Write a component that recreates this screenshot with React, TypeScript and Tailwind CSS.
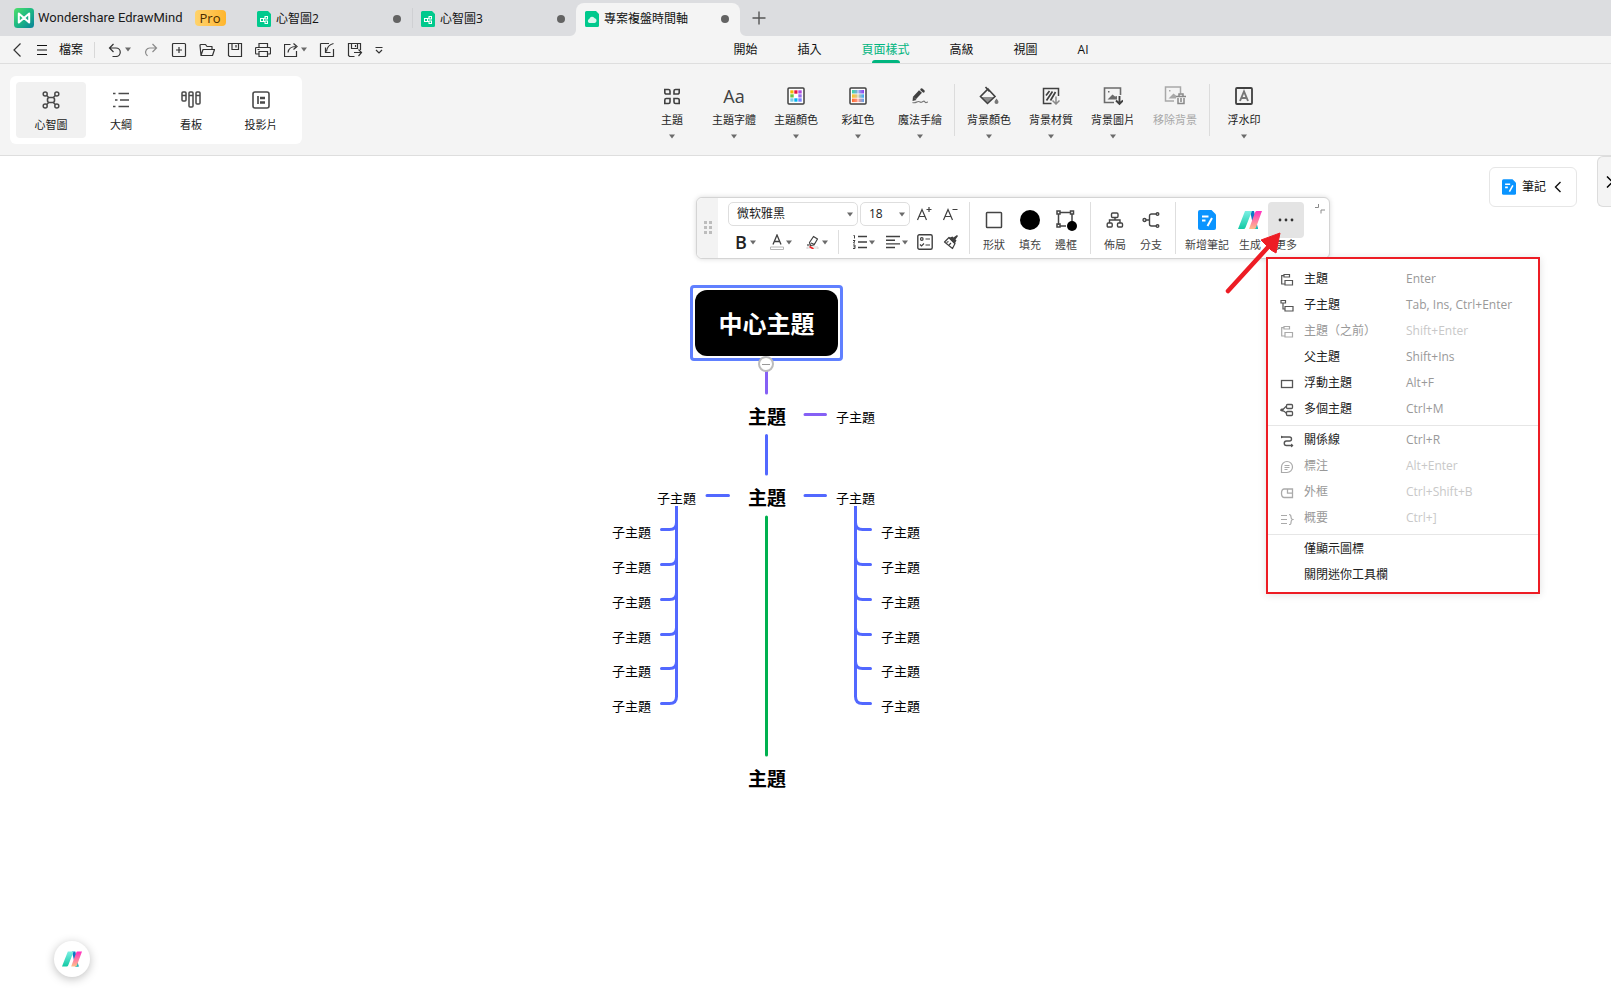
import { ReactNode, useState } from "react";
import clsx from "clsx";

type IconProps = {
    size?: number;
    className?: string;
    children: ReactNode;
};

const Svg = ({ size = 16, className, children }: IconProps) => (
    <svg
        width={size}
        height={size}
        viewBox={`0 0 ${size} ${size}`}
        fill="none"
        stroke="currentColor"
        strokeWidth={1.2}
        aria-hidden="true"
        className={clsx("block shrink-0", className)}
    >
        {children}
    </svg>
);

const Caret = () => (
    <svg width="8" height="5" viewBox="0 0 8 5" className="block shrink-0 fill-[#6b6b6b]" aria-hidden="true">
        <path d="M1 0.5h6L4 4.5z" />
    </svg>
);

/* ---------- logos ---------- */

const AppLogo = () => (
    <svg width="20" height="20" viewBox="0 0 20 20" className="block shrink-0" aria-hidden="true">
        <defs>
            <linearGradient id="appLogo" x1="0" y1="0" x2="1" y2="1">
                <stop offset="0" stopColor="#4fe06a" />
                <stop offset="0.5" stopColor="#1cb884" />
                <stop offset="1" stopColor="#07809a" />
            </linearGradient>
        </defs>
        <rect width="20" height="20" rx="3.5" fill="url(#appLogo)" />
        <path d="M4.800 14.500V5.500L10 10l5.200-4.500v9L10 10z" fill="none" stroke="#fff" strokeWidth="2" strokeLinejoin="round" />
    </svg>
);

const AiLogo = ({ size, id }: { size: number; id: string }) => (
    <svg width={size} height={size} viewBox="0 0 24 24" className="block shrink-0" aria-hidden="true">
        <defs>
            <linearGradient id={`${id}-a`} x1="0" y1="0" x2="0" y2="1">
                <stop offset="0" stopColor="#7cf0e4" />
                <stop offset="1" stopColor="#12c9a4" />
            </linearGradient>
            <linearGradient id={`${id}-b`} x1="0" y1="0" x2="0" y2="1">
                <stop offset="0" stopColor="#ff2fc0" />
                <stop offset="1" stopColor="#ffc08a" />
            </linearGradient>
        </defs>
        <path d="M12 3h4l4 18h-4z" fill="#0c78c4" />
        <path d="M17 14l3 7h-4z" fill="#16c8b0" />
        <path d="M7 3h7L7.500 19.500Q7 21 5.500 21H0z" fill={`url(#${id}-a)`} />
        <path d="M18.500 3H24l-6 16.500Q17.500 21 16 21h-5l6-16.500Q17.500 3 18.500 3z" fill={`url(#${id}-b)`} />
    </svg>
);

const FileBadge = ({ cloud }: { cloud?: boolean }) => (
    <svg width="14" height="16" viewBox="0 0 14 16" className="block shrink-0" aria-hidden="true">
        <path d="M1.500 0H11l3 3v11.500a1.500 1.500 0 0 1-1.500 1.500h-11A1.500 1.500 0 0 1 0 14.500v-13A1.500 1.500 0 0 1 1.500 0z" fill="#00c98d" />
        {cloud ? (
            <path d="M4.600 12a2 2 0 0 1-.3-3.900 2.900 2.900 0 0 1 5.400-.8 2.400 2.400 0 0 1-.1 4.700z" fill="#fff" fillOpacity="0.85" />
        ) : (
            <g fill="none" stroke="#fff">
                <rect x="3.500" y="7.500" width="3" height="3" />
                <rect x="8" y="5.500" width="2.500" height="2.500" />
                <rect x="8" y="10" width="2.500" height="2.500" />
                <path d="M6.500 8.500L8 6.500M6.500 9.500L8 11" />
            </g>
        )}
    </svg>
);

const NoteLogo = ({ large }: { large?: boolean }) => (
    <svg width={large ? 18 : 14} height={large ? 20 : 16} viewBox="0 0 18 20" className="block shrink-0" aria-hidden="true">
        <path d="M2 0h11.500L18 4.500V18a2 2 0 0 1-2 2H2a2 2 0 0 1-2-2V2a2 2 0 0 1 2-2z" fill="#0a94ff" />
        <path d="M4 6.500h6.500M4 10.500h3.500M14 8l-4.500 8" fill="none" stroke="#fff" strokeWidth="2" />
    </svg>
);

/* ---------- quick access icons ---------- */

const UndoIcon = () => (
    <Svg size={14}>
        <path d="M5.500 1L1.500 5l4 4M1.500 5H8a4.200 4.200 0 0 1 0 8.500H4.500" />
    </Svg>
);
const RedoIcon = () => (
    <Svg size={14} className="text-[#8a8a8a]">
        <path d="M8.500 1l4 4-4 4M12.500 5H6a4.200 4.200 0 0 0-4 6l1.500 2" />
    </Svg>
);
const NewIcon = () => (
    <Svg size={16}>
        <rect x="1.500" y="1.500" width="13" height="13" rx="1" />
        <path d="M8 5v6M5 8h6" />
    </Svg>
);
const OpenIcon = () => (
    <Svg size={16}>
        <path d="M2 13.500L1 3.500a1 1 0 0 1 1-1h4.500l1.500 2h5v3M2 13.500L4 7.500h11.500l-2 6z" strokeLinejoin="round" />
    </Svg>
);
const SaveIcon = () => (
    <Svg size={16}>
        <path d="M1.500 1.500h13v13h-12l-1-1zM5 1.500v6h6.500v-6M9 3v2.500" />
    </Svg>
);
const PrintIcon = () => (
    <Svg size={16}>
        <path d="M4 5.500v-4h8.500v4M4 12H1.500a1 1 0 0 1-1-1V6.500a1 1 0 0 1 1-1h13a1 1 0 0 1 1 1V11a1 1 0 0 1-1 1h-2M4 9.500h8.500v5H4zM2.500 7.500h2" />
    </Svg>
);
const ExportIcon = () => (
    <Svg size={14}>
        <path d="M6.500 1.500h-6v12h12V8M4 9.500C4.500 6 7 3.500 12 3.500M9.500 0.500l3.500 3-3.500 3" />
    </Svg>
);
const ImportIcon = () => (
    <Svg size={16}>
        <path d="M10 1.500H1.500M14.500 7v7.500h-13v-13" />
        <path d="M14.500 1.500C10.500 2.500 8 5 7.500 9.500M6.500 5.500v5h5" />
    </Svg>
);
const SaveAsIcon = () => (
    <Svg size={16}>
        <path d="M7.500 14.500h-5l-1-1v-12h12V8M4.500 1.500v5h6v-5M8.500 3v2M7 10.500h7.500M11.500 7.500l3 3-3 3.500" />
    </Svg>
);
const MoreToolsIcon = () => (
    <Svg size={8}>
        <path d="M0.500 1.500h7M1 4l3 3 3-3" />
    </Svg>
);

/* ---------- view mode icons ---------- */

const MindmapIcon = () => (
    <Svg size={18}>
        <rect x="5.500" y="6.500" width="7" height="5" rx="2" strokeWidth={1.600} />
        <g strokeWidth={1.500}>
            <circle cx="3.200" cy="3" r="2" />
            <circle cx="14.800" cy="3" r="2" />
            <circle cx="3.200" cy="15" r="2" />
            <circle cx="14.800" cy="15" r="2" />
            <path d="M4.700 4.500l2 2M13.300 4.500l-2 2M4.700 13.500l2-2M13.300 13.500l-2-2" />
        </g>
    </Svg>
);
const OutlineIcon = () => (
    <Svg size={18}>
        <path d="M1 2.500h2.500M6.500 2.500H17M3 9h2.500M8 9h9M1 15.500h2.500M6.500 15.500H17" strokeWidth={1.700} />
    </Svg>
);
const BoardIcon = () => (
    <Svg size={20}>
        <g strokeWidth={1.500}>
            <rect x="1" y="2" width="4" height="9" rx="1" />
            <rect x="8" y="2" width="4" height="15" rx="1" />
            <rect x="15" y="2" width="4" height="12" rx="1" />
            <path d="M1 5.500h4M8 5.500h4M15 5.500h4" />
        </g>
    </Svg>
);
const SlidesIcon = () => (
    <Svg size={18}>
        <rect x="1" y="1" width="16" height="16" rx="2" strokeWidth={1.600} />
        <path d="M6 5v8" strokeWidth={1.700} />
        <path d="M8 7h5M8 11.500h5" strokeWidth={2.500} />
    </Svg>
);

/* ---------- ribbon icons ---------- */

const ThemeIcon = () => (
    <Svg size={18}>
        <g strokeWidth={1.600}>
            <path d="M1.800 2.500h3.700a1.500 1.500 0 0 1 1.500 1.500v3H3.300a1.500 1.500 0 0 1-1.500-1.500zM16.200 2.500h-3.700A1.500 1.500 0 0 0 11 4v3h3.700a1.500 1.500 0 0 0 1.500-1.500zM1.800 16.500h3.700A1.500 1.500 0 0 0 7 15v-3.500H3.300A1.500 1.500 0 0 0 1.800 13zM16.200 16.500h-3.700A1.500 1.500 0 0 1 11 15v-3.500h3.700a1.500 1.500 0 0 1 1.500 1.500z" />
        </g>
    </Svg>
);

const SWATCHES = [
    { x: 3, y: 3, color: "#f5b800" },
    { x: 7, y: 3, color: "#e5173f" },
    { x: 11, y: 3, color: "#b04be0" },
    { x: 3, y: 7, color: "#6cc644" },
    { x: 11, y: 7, color: "#9a6ff0" },
    { x: 3, y: 11, color: "#7fcde8" },
    { x: 7, y: 11, color: "#00b4f0" },
    { x: 11, y: 11, color: "#7b83ff" },
];

const ThemeColorIcon = () => (
    <Svg size={18}>
        <rect x="1" y="1" width="16" height="16" rx="1" fill="#fff" strokeWidth={1.500} />
        {SWATCHES.map((s) => (
            <rect key={`${s.x}-${s.y}`} x={s.x} y={s.y} width="4" height="4" fill={s.color} stroke="#fff" strokeWidth={0.600} />
        ))}
    </Svg>
);

const RainbowIcon = () => (
    <Svg size={18}>
        <defs>
            <linearGradient id="rb1"><stop offset="0" stopColor="#38d9a0" /><stop offset="0.600" stopColor="#9a9cf0" /><stop offset="1" stopColor="#8a3cf0" /></linearGradient>
            <linearGradient id="rb2"><stop offset="0" stopColor="#ffc21f" /><stop offset="0.500" stopColor="#d5c9a0" /><stop offset="1" stopColor="#36a6ff" /></linearGradient>
            <linearGradient id="rb3"><stop offset="0" stopColor="#ff6a2b" /><stop offset="0.500" stopColor="#ff9b8a" /><stop offset="1" stopColor="#5aa2f5" /></linearGradient>
        </defs>
        <rect x="1" y="1" width="16" height="16" rx="1" fill="#fff" strokeWidth={1.500} />
        <g stroke="none">
            <rect x="3" y="3" width="12" height="3.500" fill="url(#rb1)" />
            <rect x="3" y="7.300" width="12" height="3.500" fill="url(#rb2)" />
            <rect x="3" y="11.600" width="12" height="3.500" fill="url(#rb3)" />
        </g>
        <path d="M9 2v14" stroke="#fff" strokeWidth={0.700} />
    </Svg>
);
const MagicPenIcon = () => (
    <Svg size={18}>
        <path d="M3.500 11L9.500 4.500" strokeWidth={4} />
        <path d="M10.500 2.500L12.500 4.300" strokeWidth={2.500} strokeLinecap="round" />
        <path d="M2 9.500l-.5 4.500 4-1z" fill="currentColor" stroke="none" />
        <path d="M1.500 15.500c3 1 4-1 6-1s1.500 1.500 3.500.5 2-1.500 3 0 2 0 3 0" stroke="#777" />
    </Svg>
);
const BucketIcon = () => (
    <Svg size={20}>
        <path d="M6.500 1l4 4.500" strokeWidth={1.600} />
        <path d="M2 11h13.500L8.500 17z" fill="#8d8d8d" stroke="none" />
        <path d="M9 3l7 7.500-7.500 7-7-7z" strokeWidth={1.600} />
        <path d="M17.500 12.500c1.500 2 2 2.700 2 3.500a2 2 0 0 1-4 0c0-.8.500-1.500 2-3.500z" fill="#777" stroke="none" />
    </Svg>
);
const TextureIcon = () => (
    <Svg size={18}>
        <path d="M9.500 16.500h-8v-15h15V9" strokeWidth={1.500} />
        <path d="M4 8.500L7.500 4M4.500 13.500L10.500 4.500M8.500 13.500l5-8.500" strokeWidth={1.700} />
        <path d="M14 9.500v7.500M10.500 13.500l3.500 3.500 3.500-3.500" stroke="#8a8a8a" strokeWidth={1.500} />
    </Svg>
);
const PictureIcon = () => (
    <Svg size={20}>
        <path d="M11 16.500H1.500V2h16v7" strokeWidth={1.600} stroke="#6b6b6b" />
        <path d="M4.500 13.500l5-5 2.500 2 2-.5v3.500z" fill="#6b6b6b" stroke="none" />
        <path d="M5 5h1.500v1.500H5z" fill="#6b6b6b" stroke="none" />
        <path d="M16.500 10v8M13 14.500l3.500 3.500 3.500-3.500" strokeWidth={1.900} />
    </Svg>
);
const RemoveBgIcon = () => (
    <Svg size={22}>
        <path d="M10 16H1.500V2h15v6.500" strokeWidth={1.500} />
        <path d="M4.500 13.500l5-5 2.500 2v3z" fill="currentColor" stroke="none" />
        <path d="M5 5h1.500v1.500H5z" fill="currentColor" stroke="none" />
        <path d="M12 11.500h10M15 11V9h4v2M14 13v5.500h6V13M17 13v4" stroke="#888" strokeWidth={1.500} />
    </Svg>
);
const WatermarkIcon = () => (
    <Svg size={18}>
        <rect x="1" y="1" width="16" height="16" rx="1" strokeWidth={1.800} />
        <path d="M5 14L9 4.500 13 14M6.500 11h5" stroke="#777" strokeWidth={1.900} />
    </Svg>
);

/* ---------- mini toolbar icons ---------- */

const HighlightIcon = () => (
    <Svg size={14}>
        <path d="M3.500 7.500L7.500 1.500l4 2.500-3.500 6-3.500.5zM5 8l3.500 1.500" strokeLinejoin="round" />
        <path d="M1 10h2.500" />
        <path d="M1 12h11v2H1z" stroke="#ccc" strokeWidth={0.800} />
        <path d="M3.500 11.500l4 2.500" stroke="#f02020" strokeWidth={1.500} />
    </Svg>
);
const NumberListIcon = () => (
    <Svg size={14}>
        <path d="M5 1.500h9M5 7h9M5 12.500h9" strokeWidth={1.300} />
        <path d="M0.500 0.500h1v3M0 5.500h2L0.500 8H2M0 10h2v3.500H0M0.500 11.800H2" strokeWidth={1} />
    </Svg>
);
const AlignIcon = () => (
    <Svg size={14}>
        <path d="M0 1.500h14M0 5.200h9M0 8.900h14M0 12.500h9" strokeWidth={1.400} />
    </Svg>
);
const ChecklistIcon = () => (
    <Svg size={16}>
        <rect x="0.800" y="0.800" width="14.400" height="14.400" rx="1.500" strokeWidth={1.400} />
        <circle cx="4.800" cy="5" r="1.300" />
        <path d="M8.500 5H13M8.500 11H13M3 10.500l1.500 1.500 2.500-2.500" />
    </Svg>
);
const BrushIcon = () => (
    <Svg size={16}>
        <path d="M6 3.500L12 9.500 9.500 14.500 1.500 8z" strokeLinejoin="round" />
        <path d="M5.500 4l6 6 2-3.500-1-1L15 2l-1-1-3.500 2.500-1-1z" fill="currentColor" stroke="none" />
        <path d="M3.500 8.500l2-1M6 11l2-2" />
    </Svg>
);
const ShapeIcon = () => (
    <Svg size={18}>
        <rect x="1.500" y="1.500" width="15" height="15" rx="0.800" strokeWidth={1.500} />
    </Svg>
);
const FillIcon = () => (
    <Svg size={20}>
        <circle cx="10" cy="10" r="10" fill="#000" stroke="none" />
    </Svg>
);
const BorderIcon = () => (
    <Svg size={22}>
        <path d="M3.500 5v11M5 3.500h11M17 5v8M5 17h6" strokeWidth={1.500} />
        <g strokeWidth={1.500}>
            <rect x="2" y="2" width="3" height="3" />
            <rect x="15.500" y="2" width="3" height="3" />
            <rect x="2" y="15" width="3" height="3" />
        </g>
        <circle cx="17" cy="17" r="5" fill="#000" stroke="none" />
    </Svg>
);
const LayoutIcon = () => (
    <Svg size={18}>
        <g strokeWidth={1.400}>
            <rect x="5.500" y="2" width="6.500" height="4.500" rx="1.200" />
            <rect x="1.200" y="12" width="5" height="4" rx="1" />
            <rect x="11.500" y="12" width="5" height="4" rx="1" />
            <path d="M9 6.500v2.500M3.500 12V9h10.500v3" />
        </g>
    </Svg>
);
const BranchIcon = () => (
    <Svg size={18}>
        <g strokeWidth={1.400}>
            <circle cx="2.500" cy="9" r="1.500" />
            <circle cx="15.500" cy="3" r="1.300" />
            <circle cx="15.500" cy="15" r="1.300" />
            <path d="M4 9h3.500M14 3H9.500a2 2 0 0 0-2 2v8a2 2 0 0 0 2 2H14" />
        </g>
    </Svg>
);
const DotsIcon = () => (
    <Svg size={18}>
        <g fill="#333" stroke="none">
            <circle cx="3" cy="9" r="1.400" />
            <circle cx="9" cy="9" r="1.400" />
            <circle cx="15" cy="9" r="1.400" />
        </g>
    </Svg>
);

/* ---------- popup menu icons ---------- */

const TopicIcon = () => (
    <Svg size={14}>
        <path d="M4 1.500h5.500v2.500H4zM4 2.700H1.700V11H5M5 7.500h7.500v4.500H5z" strokeWidth={1.200} />
    </Svg>
);
const SubtopicIcon = () => (
    <Svg size={14}>
        <path d="M1 1.500h4.500v2.500H1zM3 4v6h2M5 7.500h8v4.500H5z" strokeWidth={1.200} />
    </Svg>
);
const FloatingIcon = () => (
    <Svg size={14}>
        <rect x="1.500" y="3.500" width="11" height="7" strokeWidth={1.300} />
    </Svg>
);
const MultiIcon = () => (
    <Svg size={14}>
        <g strokeWidth={1.300}>
            <rect x="6.500" y="1.500" width="6" height="4" rx="1" />
            <rect x="6.500" y="8.500" width="6" height="4" rx="1" />
            <path d="M6.500 3.500C4.500 3.500 4.500 7 1.500 7s3 0 5 3.500" />
            <circle cx="2" cy="7" r="0.800" />
        </g>
    </Svg>
);
const RelationIcon = () => (
    <Svg size={14}>
        <path d="M1 3h8.500a1.800 1.800 0 0 1 0 4h-3a2.200 2.200 0 0 0 0 4.500H13" strokeWidth={1.400} />
        <path d="M1 1.500v3L3 3zM11 9.500l2.500 2-2.500 2z" fill="currentColor" stroke="none" />
    </Svg>
);
const CalloutIcon = () => (
    <Svg size={14}>
        <path d="M1.500 12.500V7a5.500 5.500 0 1 1 5.500 5.500zM4.500 5.500h5M4.500 7.500h5M4.500 9.500h3" />
    </Svg>
);
const BoundaryIcon = () => (
    <Svg size={14}>
        <path d="M4 3h8.500v8.500H4Q1.500 11 1.500 7.200T4 3zM7.500 3v4.200h5" strokeWidth={1.300} />
    </Svg>
);
const SummaryIcon = () => (
    <Svg size={14}>
        <path d="M1 3.500h6M1 7.500h6M1 11.500h6M9 2.500c2 0 2 1 2 2.500s0 2 1.500 2.500C11 8 11 9 11 10.500S11 12.500 9 12.500" />
    </Svg>
);

/* ---------- data ---------- */

const FILE_TABS = [
    { id: "map2", title: "心智圖2" },
    { id: "map3", title: "心智圖3" },
    { id: "timeline", title: "專案複盤時間軸", cloud: true },
];

const MENU_TABS = ["開始", "插入", "頁面樣式", "高級", "視圖", "AI"];

const VIEW_MODES = [
    { label: "心智圖", icon: <MindmapIcon /> },
    { label: "大綱", icon: <OutlineIcon /> },
    { label: "看板", icon: <BoardIcon /> },
    { label: "投影片", icon: <SlidesIcon /> },
];

type RibbonItem = { label: string; icon: ReactNode; disabled?: boolean };

const RIBBON_GROUPS: RibbonItem[][] = [
    [
        { label: "主題", icon: <ThemeIcon /> },
        { label: "主題字體", icon: <span className="text-[18px] leading-5">Aa</span> },
        { label: "主題顏色", icon: <ThemeColorIcon /> },
        { label: "彩虹色", icon: <RainbowIcon /> },
        { label: "魔法手繪", icon: <MagicPenIcon /> },
    ],
    [
        { label: "背景顏色", icon: <BucketIcon /> },
        { label: "背景材質", icon: <TextureIcon /> },
        { label: "背景圖片", icon: <PictureIcon /> },
        { label: "移除背景", icon: <RemoveBgIcon />, disabled: true },
    ],
    [{ label: "浮水印", icon: <WatermarkIcon /> }],
];

type MenuEntry = { label: string; keys?: string; icon?: ReactNode; disabled?: boolean };

const MENU_GROUPS: MenuEntry[][] = [
    [
        { label: "主題", keys: "Enter", icon: <TopicIcon /> },
        { label: "子主題", keys: "Tab, Ins, Ctrl+Enter", icon: <SubtopicIcon /> },
        { label: "主題（之前）", keys: "Shift+Enter", icon: <TopicIcon />, disabled: true },
        { label: "父主題", keys: "Shift+Ins" },
        { label: "浮動主題", keys: "Alt+F", icon: <FloatingIcon /> },
        { label: "多個主題", keys: "Ctrl+M", icon: <MultiIcon /> },
    ],
    [
        { label: "關係線", keys: "Ctrl+R", icon: <RelationIcon /> },
        { label: "標注", keys: "Alt+Enter", icon: <CalloutIcon />, disabled: true },
        { label: "外框", keys: "Ctrl+Shift+B", icon: <BoundaryIcon />, disabled: true },
        { label: "概要", keys: "Ctrl+]", icon: <SummaryIcon />, disabled: true },
    ],
    [{ label: "僅顯示圖標" }, { label: "關閉迷你工具欄" }],
];

// y of every leaf branch on the canvas
const LEAF_LINES = [374, 409, 444, 479, 513, 548];

/* ---------- layout pieces ---------- */

const TabCorner = ({ right }: { right?: boolean }) => (
    <svg
        width="6"
        height="6"
        viewBox="0 0 6 6"
        aria-hidden="true"
        className={clsx("absolute bottom-0 fill-[#f4f4f4]", right ? "-right-1.5" : "-left-1.5")}
    >
        <path d={right ? "M0 0a6 6 0 0 0 6 6H0z" : "M6 0a6 6 0 0 1-6 6h6z"} />
    </svg>
);

function TitleBar() {
    const [active, setActive] = useState("timeline");

    return (
        <header className="flex h-9 items-stretch bg-[#dcdde0]">
            <div className="flex w-[248px] shrink-0 items-center gap-1 pl-3.5">
                <AppLogo />
                <span className="font-[Roboto] text-[13px] whitespace-nowrap text-[#1a1a1a]">Wondershare EdrawMind</span>
                <span className="ml-2 rounded-[4px] bg-linear-to-r from-[#ffd36b] to-[#ffb52b] px-[5px] text-[13px] leading-4 text-[#4a2c00]">
                    Pro
                </span>
            </div>
            {FILE_TABS.map((tab, i) => (
                <div key={tab.id} className="relative flex w-[164px] shrink-0 pt-[3px]">
                    {i === 1 && <span className="absolute top-2 left-0 h-5 w-px bg-[#cfd0d3]" />}
                    <button
                        type="button"
                        onClick={() => setActive(tab.id)}
                        className={clsx(
                            "flex flex-1 items-center gap-[5px] rounded-t-lg pr-[11px] pb-[2px] pl-[9px] text-xs text-[#111]",
                            active === tab.id && "bg-[#f4f4f4]"
                        )}
                    >
                        <FileBadge cloud={tab.cloud} />
                        <span className="flex-1 text-left whitespace-nowrap">{tab.title}</span>
                        <span className="size-2 rounded-full bg-[#636363]" />
                    </button>
                    {active === tab.id && (
                        <>
                            <TabCorner />
                            <TabCorner right />
                        </>
                    )}
                </div>
            ))}
            <button type="button" aria-label="New tab" className="ml-[9px] flex w-5 items-center justify-center text-[#555]">
                <Svg size={14}>
                    <path d="M7 0.500v13M0.500 7h13" strokeWidth={1.400} />
                </Svg>
            </button>
        </header>
    );
}

const QuickButton = ({ label, caret, children }: { label: string; caret?: boolean; children: ReactNode }) => (
    <button
        type="button"
        aria-label={label}
        className={clsx("flex h-6 shrink-0 items-center", caret ? "w-9 gap-0.5 pl-[7px]" : "w-7 justify-center")}
    >
        {children}
        {caret && <Caret />}
    </button>
);

function MenuBar() {
    const [active, setActive] = useState("頁面樣式");

    return (
        <div className="flex h-7 items-center border-b border-[#dedede] text-[#333]">
            <div className="flex shrink-0 items-center pl-[7px]">
                <button type="button" aria-label="Back" className="flex h-6 w-5 items-center justify-center">
                    <Svg size={14}>
                        <path d="M10.500 0.500L4 7l6.500 6.500" />
                    </Svg>
                </button>
                <button type="button" className="ml-[7px] flex items-center gap-[11px] text-xs text-[#111]">
                    <Svg size={12} className="ml-0.5">
                        <path d="M1 1.500h10M1 6h10M1 10.500h10" />
                    </Svg>
                    檔案
                </button>
                <span className="mr-1.5 ml-[11px] h-4 w-px bg-[#d8d8d8]" />
                <QuickButton label="Undo" caret><UndoIcon /></QuickButton>
                <QuickButton label="Redo"><RedoIcon /></QuickButton>
                <QuickButton label="New"><NewIcon /></QuickButton>
                <QuickButton label="Open"><OpenIcon /></QuickButton>
                <QuickButton label="Save"><SaveIcon /></QuickButton>
                <QuickButton label="Print"><PrintIcon /></QuickButton>
                <QuickButton label="Export" caret><ExportIcon /></QuickButton>
                <QuickButton label="Import"><ImportIcon /></QuickButton>
                <QuickButton label="Save as"><SaveAsIcon /></QuickButton>
                <button type="button" aria-label="More tools" className="flex h-6 w-5 items-center justify-center">
                    <MoreToolsIcon />
                </button>
            </div>
            <nav className="flex h-full flex-1 justify-center gap-10 pr-[178px]">
                {MENU_TABS.map((tab) => (
                    <button
                        key={tab}
                        type="button"
                        onClick={() => setActive(tab)}
                        className={clsx(
                            "relative text-xs whitespace-nowrap",
                            active === tab ? "text-[#00b57f]" : "text-[#111]"
                        )}
                    >
                        {tab}
                        {active === tab && (
                            <span className="absolute bottom-0 left-1/2 h-[3px] w-7 -translate-x-1/2 rounded-t-sm bg-[#00b57f]" />
                        )}
                    </button>
                ))}
            </nav>
        </div>
    );
}

function Ribbon() {
    const [mode, setMode] = useState("心智圖");

    return (
        <div className="flex h-[92px] items-start border-b border-[#dedede] pt-3 pl-2.5">
            <div className="flex rounded-md bg-white p-1.5">
                {VIEW_MODES.map((v) => (
                    <button
                        key={v.label}
                        type="button"
                        onClick={() => setMode(v.label)}
                        className={clsx(
                            "flex h-14 w-[70px] flex-col items-center rounded-[4px] pt-2 text-[11px] leading-4 text-[#222]",
                            mode === v.label && "bg-[#f1f1f1]"
                        )}
                    >
                        <span className="flex h-5 items-center text-[#4a4a4a]">{v.icon}</span>
                        <span className="mt-[7px]">{v.label}</span>
                    </button>
                ))}
            </div>
            <div className="flex flex-1 justify-center pt-2 pl-[3px]">
                {RIBBON_GROUPS.map((group, i) => (
                    <div key={i} className="flex">
                        {i > 0 && <span className="mx-[3px] h-[52px] w-px bg-[#dcdcdc]" />}
                        {group.map((item) => (
                            <button
                                key={item.label}
                                type="button"
                                disabled={item.disabled}
                                className={clsx(
                                    "flex w-[62px] flex-col items-center pt-0.5 text-[11px] leading-4 whitespace-nowrap",
                                    item.disabled ? "text-[#a8a8a8]" : "text-[#222]"
                                )}
                            >
                                <span className={clsx("flex h-5 items-center", !item.disabled && "text-[#404040]")}>{item.icon}</span>
                                <span className="my-1.5">{item.label}</span>
                                {!item.disabled && <Caret />}
                            </button>
                        ))}
                    </div>
                ))}
            </div>
        </div>
    );
}

const Divider = () => <span className="mx-1.5 h-[52px] w-px shrink-0 bg-[#dedede]" />;

const SmallTool = ({ label, tight, children }: { label: string; tight?: boolean; children: ReactNode }) => (
    <button
        type="button"
        aria-label={label}
        className={clsx("flex h-6 items-center gap-px pl-1.5", tight ? "w-[33px]" : "w-9")}
    >
        <span className="flex w-3.5 justify-center">{children}</span>
        <Caret />
    </button>
);

const BigTool = ({ label, wide, active, children }: { label: string; wide?: boolean; active?: boolean; children: ReactNode }) => (
    <button
        type="button"
        className={clsx("flex flex-col items-center gap-px text-[11px] leading-3 whitespace-nowrap text-[#444]", wide ? "w-[50px]" : "w-9")}
    >
        <span className={clsx("flex size-9 items-center justify-center rounded-[4px]", active && "bg-[#e4e4e4]")}>{children}</span>
        {label}
    </button>
);

const selectStyle = "block h-6 w-full appearance-none rounded-[5px] border border-[#dedede] bg-white pl-2 text-xs text-[#222]";

function MiniToolbar() {
    return (
        <div className="absolute top-[41px] left-[696px] flex h-[62px] rounded-md border border-[#d4d4d4] bg-white text-[#404040] shadow-[0_0_5px_rgba(0,0,0,0.15)]">
            <div className="flex w-[21px] items-center justify-center rounded-l-md bg-[#f3f3f3]">
                <svg width="8" height="14" viewBox="0 0 8 14" className="fill-[#bdbdbd]" aria-hidden="true">
                    <path d="M0 0h3v3H0zM5 0h3v3H5zM0 5h3v3H0zM5 5h3v3H5zM0 10h3v3H0zM5 10h3v3H5z" />
                </svg>
            </div>
            <div className="flex pt-1 pl-2.5">
                <div className="flex flex-col gap-1">
                    <div className="flex gap-0.5">
                        <div className="relative w-[130px]">
                            <select aria-label="Font" className={selectStyle}>
                                <option>微软雅黑</option>
                            </select>
                            <span className="pointer-events-none absolute top-[10px] right-1"><Caret /></span>
                        </div>
                        <div className="relative w-[50px]">
                            <select aria-label="Font size" className={selectStyle}>
                                <option>18</option>
                            </select>
                            <span className="pointer-events-none absolute top-[10px] right-1"><Caret /></span>
                        </div>
                        <button type="button" aria-label="Increase font size" className="h-6 w-6">
                            <Svg size={24}>
                                <path d="M5.500 18L10 7.500 14.500 18M7 14.500h6M14.500 7.500h5M17 5v5" />
                            </Svg>
                        </button>
                        <button type="button" aria-label="Decrease font size" className="h-6 w-6">
                            <Svg size={24}>
                                <path d="M5.500 18L10 7.500 14.500 18M7 14.500h6M14.500 7.500h5" />
                            </Svg>
                        </button>
                    </div>
                    <div className="flex">
                        <SmallTool label="Bold">
                            <span className="text-lg leading-6 font-semibold text-[#222]">B</span>
                        </SmallTool>
                        <SmallTool label="Font color">
                            <Svg size={16}>
                                <path d="M4 10.500L8 1l4 9.500M5.500 7.500h5" strokeWidth={1.300} />
                                <path d="M1.500 13h13v2.500h-13z" stroke="#b5b5b5" strokeWidth={1} />
                            </Svg>
                        </SmallTool>
                        <SmallTool label="Highlight"><HighlightIcon /></SmallTool>
                        <span className="mr-2 ml-0.5 h-6 w-px bg-[#dedede]" />
                        <SmallTool label="Numbering" tight><NumberListIcon /></SmallTool>
                        <SmallTool label="Align" tight><AlignIcon /></SmallTool>
                        <button type="button" aria-label="Checklist" className="flex size-6 items-center justify-center">
                            <ChecklistIcon />
                        </button>
                        <button type="button" aria-label="Format painter" className="ml-0.5 flex size-6 items-center justify-center">
                            <BrushIcon />
                        </button>
                    </div>
                </div>
                <Divider />
                <BigTool label="形狀"><ShapeIcon /></BigTool>
                <BigTool label="填充"><FillIcon /></BigTool>
                <BigTool label="邊框"><BorderIcon /></BigTool>
                <Divider />
                <BigTool label="佈局"><LayoutIcon /></BigTool>
                <BigTool label="分支"><BranchIcon /></BigTool>
                <Divider />
                <BigTool label="新增筆記" wide><NoteLogo large /></BigTool>
                <BigTool label="生成"><AiLogo size={24} id="gen" /></BigTool>
                <BigTool label="更多" active><DotsIcon /></BigTool>
            </div>
            <button type="button" aria-label="Collapse" className="mr-1 ml-[11px] self-start pt-1.5 text-[#8a8a8a]">
                <Svg size={10}>
                    <path d="M0 3.500h3.500V0M6 9.500V6h4" strokeWidth={1} />
                </Svg>
            </button>
        </div>
    );
}

function MoreMenu() {
    return (
        <div className="absolute top-[101px] left-[1266px] w-[274px] border-2 border-[#ed1c24] bg-white pt-[7px] pb-1 shadow-[0_1px_8px_rgba(0,0,0,0.12)]">
            {MENU_GROUPS.map((group, i) => (
                <div key={i}>
                    {i > 0 && <div className="mt-[3px] mb-px h-px bg-[#e6e6e6]" />}
                    {group.map((item) => (
                        <button
                            key={item.label}
                            type="button"
                            disabled={item.disabled}
                            className="group flex h-[26px] w-full items-center pl-3 text-left text-xs text-[#222] disabled:text-[#999]"
                        >
                            <span className="w-6 pt-0.5 text-[#555] group-disabled:text-[#aaa]">{item.icon}</span>
                            <span className="w-[102px] whitespace-nowrap">{item.label}</span>
                            <span className="whitespace-nowrap text-[#999] group-disabled:text-[#c8c8c8]">{item.keys}</span>
                        </button>
                    ))}
                </div>
            ))}
        </div>
    );
}

const nodeBase = "absolute -translate-y-1/2 whitespace-nowrap text-black";

function MindMap() {
    return (
        <>
            <svg width="940" height="640" viewBox="0 0 940 640" className="absolute top-0 left-0" aria-hidden="true">
                <g fill="none" strokeWidth="3" strokeLinecap="round">
                    <path d="M766.500 204v33M805 258.500h20.500" stroke="#8560f5" />
                    <path d="M766.500 279.500v38.500M707 339.500h21.500M805 339.500h20.500" stroke="#5268ff" />
                    <path d="M766.500 361v238" stroke="#00b14f" />
                    <path d="M676.500 350v191M855.500 350v191" stroke="#5268ff" strokeLinecap="butt" />
                    {LEAF_LINES.map((y) => (
                        <path
                            key={y}
                            d={`M661.500 ${y - 0.500}h8q7 0 7-7M870.500 ${y - 0.500}h-8q-7 0-7-7`}
                            stroke="#5268ff"
                        />
                    ))}
                </g>
            </svg>
            <div className="absolute top-[129px] left-[690px] rounded-[4px] border-[3px] border-[#6080ff] p-0.5">
                <div className="flex h-[66px] w-[143px] items-center justify-center rounded-xl bg-black pt-0.5 text-2xl font-bold text-white">
                    中心主題
                </div>
            </div>
            <button
                type="button"
                aria-label="Fold branch"
                className="absolute top-[200px] left-[758px] flex size-4 items-center justify-center rounded-full border-2 border-[#bcbcbc] bg-white"
            >
                <span className="h-px w-2 bg-[#999]" />
            </button>

            <span className={clsx(nodeBase, "top-[261px] left-[748px] text-[19px] font-bold")}>主題</span>
            <span className={clsx(nodeBase, "top-[262px] left-[836px] text-[13px]")}>子主題</span>
            <span className={clsx(nodeBase, "top-[342px] left-[748px] text-[19px] font-bold")}>主題</span>
            <span className={clsx(nodeBase, "top-[343px] left-[836px] text-[13px]")}>子主題</span>
            <span className={clsx(nodeBase, "top-[343px] left-[657px] text-[13px]")}>子主題</span>
            <span className={clsx(nodeBase, "top-[623px] left-[748px] text-[19px] font-bold")}>主題</span>
            {LEAF_LINES.map((y) => (
                <div key={y}>
                    <span className={clsx(nodeBase, "left-[612px] text-[13px]")} style={{ top: y + 3 }}>子主題</span>
                    <span className={clsx(nodeBase, "left-[881px] text-[13px]")} style={{ top: y + 3 }}>子主題</span>
                </div>
            ))}
        </>
    );
}

export default function App() {
    return (
        <div
            lang="zh-TW"
            className="flex min-h-screen flex-col overflow-hidden bg-[#f4f4f4] font-['Open_Sans','Noto_Sans_CJK_TC',sans-serif]"
        >
            <TitleBar />
            <MenuBar />
            <Ribbon />
            <main className="relative flex-1 bg-white">
                <MindMap />
                <MiniToolbar />
                <MoreMenu />

                {/* pointer to the "more" button */}
                <svg width="60" height="66" viewBox="0 0 60 66" className="pointer-events-none absolute top-[75px] left-[1224px]" aria-hidden="true">
                    <path d="M4 60L46 14" stroke="#ed1c24" strokeWidth="4.500" strokeLinecap="round" />
                    <path d="M56 2L37 9l6 6 4 4 5 3z" fill="#ed1c24" stroke="#ed1c24" strokeLinejoin="round" />
                </svg>

                <button
                    type="button"
                    className="absolute top-[11px] right-[34px] flex h-10 items-center gap-1.5 rounded-md border border-[#e6e6e6] bg-white pr-3 pl-3 text-xs text-[#111]"
                >
                    <NoteLogo />
                    筆記
                    <Svg size={12}>
                        <path d="M8.500 1L3.500 6l5 5" strokeWidth={1.400} />
                    </Svg>
                </button>
                <button
                    type="button"
                    aria-label="Open side panel"
                    className="absolute top-0 right-0 flex h-[51px] w-3.5 items-center overflow-hidden rounded-l-md border border-r-0 border-[#dcdcdc] bg-[#f4f4f4] pl-2"
                >
                    <Svg size={12}>
                        <path d="M1 0.500L6.500 6 1 11.500" strokeWidth={1.500} />
                    </Svg>
                </button>
                <button
                    type="button"
                    aria-label="AI assistant"
                    className="absolute bottom-[21px] left-[54px] flex size-9 items-center justify-center rounded-full bg-white shadow-[0_2px_10px_rgba(0,0,0,0.25)]"
                >
                    <AiLogo size={20} id="assistant" />
                </button>
            </main>
        </div>
    );
}
